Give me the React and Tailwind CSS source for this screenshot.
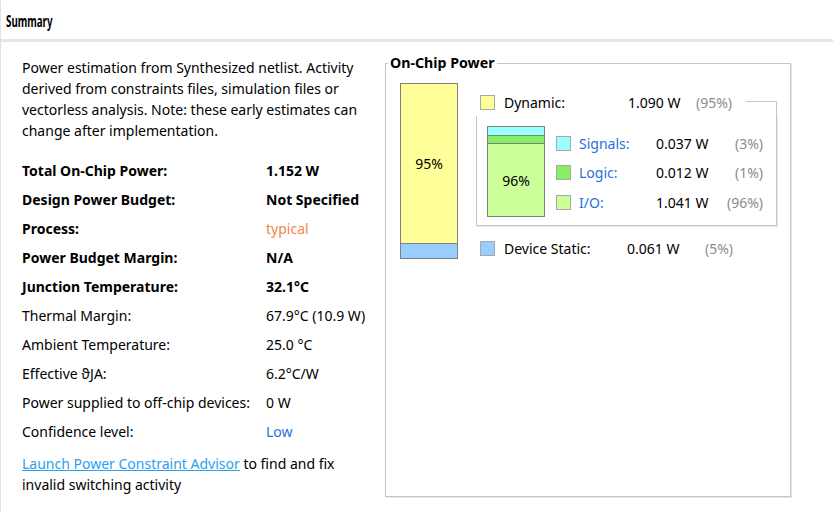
import React from "react";

const rows = [
  { label: "Total On-Chip Power:", value: "1.152 W", bold: true },
  { label: "Design Power Budget:", value: "Not Specified", bold: true },
  { label: "Process:", value: "typical", bold: true, valueClass: "text-[#f58450] font-normal" },
  { label: "Power Budget Margin:", value: "N/A", bold: true },
  { label: "Junction Temperature:", value: "32.1°C", bold: true },
  { label: "Thermal Margin:", value: "67.9°C (10.9 W)" },
  { label: "Ambient Temperature:", value: "25.0 °C" },
  { label: "Effective ϑJA:", value: "6.2°C/W" },
  { label: "Power supplied to off-chip devices:", value: "0 W" },
  { label: "Confidence level:", value: "Low", valueClass: "text-[#2a6fdc]" },
];

const Swatch = ({ color }) => (
  <span className={`inline-block h-[15px] w-[15px] shrink-0 border border-[#a8a8a8] ${color}`} />
);

const SubRow = ({ color, label, value, pct }) => (
  <div className="flex h-[22px] items-center">
    <Swatch color={color} />
    <span className="ml-[8px] w-[77px] text-[#2a6fdc]">{label}</span>
    <span className="w-[66px]">{value}</span>
    <span className="flex-1 whitespace-nowrap text-right text-[#8c8c8c]">{pct}</span>
  </div>
);

export default function App() {
  return (
    <div
      className="flex h-[512px] w-[833px] flex-col overflow-hidden border-l border-[#e2e2e2] bg-white text-[14px] text-black"
      style={{ fontFamily: '"Noto Sans", "Open Sans", sans-serif' }}
    >
      <div className="flex h-[39px] items-center px-[5px] pt-[4px]">
        <span className="origin-left scale-x-[0.63] text-[15.5px] font-bold">Summary</span>
      </div>
      <div className="h-[3px] bg-[#e6e6e6]" />

      <div className="flex">
        {/* left column */}
        <div className="w-[384px] pl-[21px] pt-[15px]">
          <p className="leading-[21px]">
            Power estimation from Synthesized netlist. Activity
            <br />
            derived from constraints files, simulation files or
            <br />
            vectorless analysis. Note: these early estimates can
            <br />
            change after implementation.
          </p>
          <div className="mt-[15px]">
            {rows.map((r) => (
              <div key={r.label} className="flex h-[29px] items-center">
                <span className={`w-[244px] ${r.bold ? "font-bold" : ""}`}>{r.label}</span>
                <span className={`${r.bold ? "font-bold" : ""} ${r.valueClass || ""}`}>{r.value}</span>
              </div>
            ))}
          </div>
          <p className="mt-[7px] leading-[21px]">
            <a className="text-[#2a9ff0] underline">Launch Power Constraint Advisor</a> to find and fix
            <br />
            invalid switching activity
          </p>
        </div>

        {/* On-Chip Power group */}
        <fieldset className="mt-[12px] h-[443px] w-[406px] border border-[#c6c6c6] shadow-[1px_1px_0_#e6e6e6]">
          <legend className="ml-[2px] px-[2px] text-[14.2px] font-bold leading-[18px]">On-Chip Power</legend>
          <div className="flex pl-[14px] pt-[11px]">
            <div className="flex h-[176px] w-[58px] flex-col border border-[#808080]">
              <div className="flex grow items-center justify-center bg-[#ffff99]">95%</div>
              <div className="h-[15px] border-t border-[#808080] bg-[#99ccff]" />
            </div>

            <div className="ml-[18px] mt-[8px] w-[301px]">
              {/* Dynamic */}
              <div className="flex h-[25px] items-start">
                <div className="flex h-[22px] items-center pl-[4px]">
                  <Swatch color="bg-[#ffff99]" />
                  <span className="ml-[9px] w-[124px]">Dynamic:</span>
                  <span className="w-[68px]">1.090 W</span>
                  <span className="text-[#8c8c8c]">(95%)</span>
                </div>
                <div className="ml-[14px] mt-[10px] h-[15px] grow border-r border-t border-[#c6c6c6]" />
              </div>
              <div className="flex border-b border-l border-r border-[#c6c6c6] pb-[8px] pl-[10px] pr-[13px] pt-[10px] shadow-[1px_1px_0_#e6e6e6]">
                <div className="flex h-[91px] w-[58px] flex-col border border-[#808080]">
                  <div className="h-[8px] bg-[#99ffff]" />
                  <div className="h-[8px] border-t border-[#808080] bg-[#88ee66]" />
                  <div className="flex grow items-center justify-center border-t border-[#808080] bg-[#ccff99]">
                    96%
                  </div>
                </div>
                <div className="ml-[11px] mt-[6px] flex grow flex-col gap-[7.5px]">
                  <SubRow color="bg-[#99ffff]" label="Signals:" value="0.037 W" pct="(3%)" />
                  <SubRow color="bg-[#88ee66]" label="Logic:" value="0.012 W" pct="(1%)" />
                  <SubRow color="bg-[#ccff99]" label="I/O:" value="1.041 W" pct="(96%)" />
                </div>
              </div>
              {/* Device Static */}
              <div className="mt-[11px] flex h-[22px] items-center pl-[4px]">
                <Swatch color="bg-[#99ccff]" />
                <span className="ml-[9px] w-[123px]">Device Static:</span>
                <span className="w-[78px]">0.061 W</span>
                <span className="text-[#8c8c8c]">(5%)</span>
              </div>
            </div>
          </div>
        </fieldset>
      </div>
    </div>
  );
}
